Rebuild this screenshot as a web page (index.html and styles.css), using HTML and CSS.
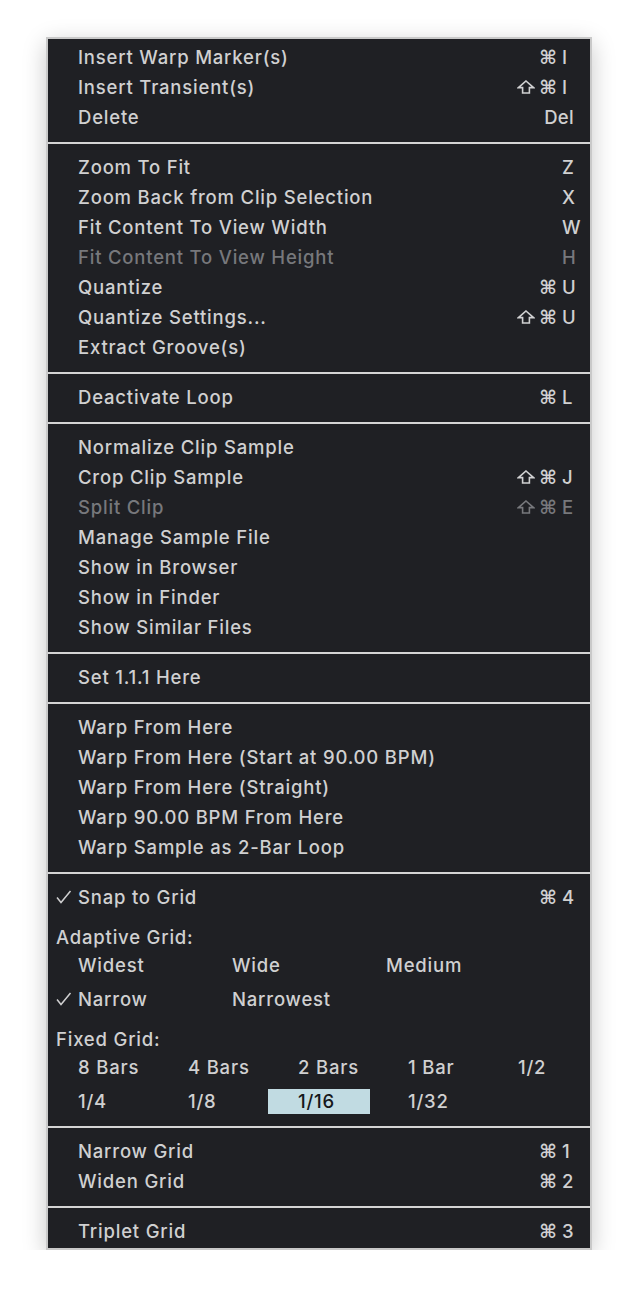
FILE: index.html
```html
<!DOCTYPE html>
<html>
<head>
<meta charset="utf-8">
<link rel="stylesheet" href="styles.css">
</head>
<body>
<div class="menu">
  <div class="section first">
    <div class="item"><span class="chk"></span><span class="label">Insert Warp Marker(s)</span><span class="sc"><span class="mod">⌘</span><span class="key">I</span></span></div>
    <div class="item"><span class="chk"></span><span class="label">Insert Transient(s)</span><span class="sc"><svg class="shift" width="18" height="14" viewBox="0 0 18 14"><polygon points="9,1 16.5,7.6 12.4,7.6 12.4,13 5.6,13 5.6,7.6 1.5,7.6" fill="none" stroke="currentColor" stroke-width="1.6"/></svg><span class="mod">⌘</span><span class="key">I</span></span></div>
    <div class="item"><span class="chk"></span><span class="label">Delete</span><span class="sc"><span class="word">Del</span></span></div>
  </div>
  <div class="sep"></div>
  <div class="section">
    <div class="item"><span class="chk"></span><span class="label">Zoom To Fit</span><span class="sc"><span class="key">Z</span></span></div>
    <div class="item"><span class="chk"></span><span class="label">Zoom Back from Clip Selection</span><span class="sc"><span class="key">X</span></span></div>
    <div class="item"><span class="chk"></span><span class="label">Fit Content To View Width</span><span class="sc"><span class="key">W</span></span></div>
    <div class="item disabled"><span class="chk"></span><span class="label">Fit Content To View Height</span><span class="sc"><span class="key">H</span></span></div>
    <div class="item"><span class="chk"></span><span class="label">Quantize</span><span class="sc"><span class="mod">⌘</span><span class="key">U</span></span></div>
    <div class="item"><span class="chk"></span><span class="label">Quantize Settings...</span><span class="sc"><svg class="shift" width="18" height="14" viewBox="0 0 18 14"><polygon points="9,1 16.5,7.6 12.4,7.6 12.4,13 5.6,13 5.6,7.6 1.5,7.6" fill="none" stroke="currentColor" stroke-width="1.6"/></svg><span class="mod">⌘</span><span class="key">U</span></span></div>
    <div class="item"><span class="chk"></span><span class="label">Extract Groove(s)</span></div>
  </div>
  <div class="sep"></div>
  <div class="section">
    <div class="item"><span class="chk"></span><span class="label">Deactivate Loop</span><span class="sc"><span class="mod">⌘</span><span class="key">L</span></span></div>
  </div>
  <div class="sep"></div>
  <div class="section">
    <div class="item"><span class="chk"></span><span class="label">Normalize Clip Sample</span></div>
    <div class="item"><span class="chk"></span><span class="label">Crop Clip Sample</span><span class="sc"><svg class="shift" width="18" height="14" viewBox="0 0 18 14"><polygon points="9,1 16.5,7.6 12.4,7.6 12.4,13 5.6,13 5.6,7.6 1.5,7.6" fill="none" stroke="currentColor" stroke-width="1.6"/></svg><span class="mod">⌘</span><span class="key">J</span></span></div>
    <div class="item disabled"><span class="chk"></span><span class="label">Split Clip</span><span class="sc"><svg class="shift" width="18" height="14" viewBox="0 0 18 14"><polygon points="9,1 16.5,7.6 12.4,7.6 12.4,13 5.6,13 5.6,7.6 1.5,7.6" fill="none" stroke="currentColor" stroke-width="1.6"/></svg><span class="mod">⌘</span><span class="key">E</span></span></div>
    <div class="item"><span class="chk"></span><span class="label">Manage Sample File</span></div>
    <div class="item"><span class="chk"></span><span class="label">Show in Browser</span></div>
    <div class="item"><span class="chk"></span><span class="label">Show in Finder</span></div>
    <div class="item"><span class="chk"></span><span class="label">Show Similar Files</span></div>
  </div>
  <div class="sep"></div>
  <div class="section">
    <div class="item"><span class="chk"></span><span class="label">Set 1.1.1 Here</span></div>
  </div>
  <div class="sep"></div>
  <div class="section">
    <div class="item"><span class="chk"></span><span class="label">Warp From Here</span></div>
    <div class="item"><span class="chk"></span><span class="label">Warp From Here (Start at 90.00 BPM)</span></div>
    <div class="item"><span class="chk"></span><span class="label">Warp From Here (Straight)</span></div>
    <div class="item"><span class="chk"></span><span class="label">Warp 90.00 BPM From Here</span></div>
    <div class="item"><span class="chk"></span><span class="label">Warp Sample as 2-Bar Loop</span></div>
  </div>
  <div class="sep"></div>
  <div class="section grid-section">
    <div class="item"><span class="chk"><svg width="16" height="14" viewBox="0 0 16 14"><polyline points="1,7.5 5,12.5 14.5,1" fill="none" stroke="currentColor" stroke-width="1.5"/></svg></span><span class="label">Snap to Grid</span><span class="sc"><span class="mod">⌘</span><span class="key">4</span></span></div>
    <div class="group-label">Adaptive Grid:</div>
    <div class="adaptive">
      <div class="cell"><span class="chk"></span>Widest</div>
      <div class="cell"><span class="chk"></span>Wide</div>
      <div class="cell"><span class="chk"></span>Medium</div>
      <div class="cell"><span class="chk"><svg width="16" height="14" viewBox="0 0 16 14"><polyline points="1,7.5 5,12.5 14.5,1" fill="none" stroke="currentColor" stroke-width="1.5"/></svg></span>Narrow</div>
      <div class="cell"><span class="chk"></span>Narrowest</div>
    </div>
    <div class="group-label fixed-label">Fixed Grid:</div>
    <div class="fixed">
      <div class="fcell">8 Bars</div>
      <div class="fcell">4 Bars</div>
      <div class="fcell">2 Bars</div>
      <div class="fcell">1 Bar</div>
      <div class="fcell">1/2</div>
      <div class="fcell">1/4</div>
      <div class="fcell">1/8</div>
      <div class="fcell selected">1/16</div>
      <div class="fcell">1/32</div>
    </div>
  </div>
  <div class="sep"></div>
  <div class="section">
    <div class="item"><span class="chk"></span><span class="label">Narrow Grid</span><span class="sc"><span class="mod">⌘</span><span class="key">1</span></span></div>
    <div class="item"><span class="chk"></span><span class="label">Widen Grid</span><span class="sc"><span class="mod">⌘</span><span class="key">2</span></span></div>
  </div>
  <div class="sep"></div>
  <div class="section last">
    <div class="item"><span class="chk"></span><span class="label">Triplet Grid</span><span class="sc"><span class="mod">⌘</span><span class="key">3</span></span></div>
  </div>
</div>
</body>
</html>
```
FILE: styles.css
```css
html, body {
  margin: 0;
  background: #ffffff;
}
body {
  padding: 37px 0 0 46px;
  font-family: Inter, "Noto Sans", sans-serif;
  font-size: 18.5px;
  font-weight: 500;
  letter-spacing: 0.8px;
  color: #d0d0d1;
}
.menu {
  box-sizing: border-box;
  width: 546px;
  background: #1f2024;
  border: 2px solid #c9c9c9;
  box-shadow: 0 6px 22px rgba(0, 0, 0, 0.22);
}
.section {
  padding: 8px 0 10px;
}
.section.first {
  padding-top: 3px;
}
.section.grid-section {
  padding-bottom: 8px;
}
.section.last {
  padding-bottom: 2px;
}
.sep {
  height: 2px;
  background: #d4d4d4;
}
.item {
  display: flex;
  align-items: center;
  height: 30px;
  padding: 0 16px 0 8px;
}
.chk {
  display: inline-flex;
  align-items: center;
  width: 22px;
  flex: none;
}
.label {
  flex: 1;
  white-space: nowrap;
}
.disabled {
  color: #77787c;
}
.sc {
  display: flex;
  align-items: center;
}
.shift {
  display: block;
}
.mod {
  font-family: "DejaVu Sans", sans-serif;
  font-size: 19px;
  font-weight: 700;
  letter-spacing: 0;
  margin-left: 4px;
}
.key {
  width: 12px;
  margin-left: 5px;
  letter-spacing: 0;
  white-space: nowrap;
}
.word {
  letter-spacing: 0.3px;
}
.group-label {
  height: 22px;
  line-height: 22px;
  margin-top: 14px;
  padding-left: 8px;
}
.group-label.fixed-label {
  margin-top: 12px;
}
.adaptive {
  display: grid;
  grid-template-columns: repeat(3, 154px);
  grid-auto-rows: 34px;
}
.cell {
  display: flex;
  align-items: center;
  padding-left: 8px;
  white-space: nowrap;
}
.fixed {
  display: grid;
  grid-template-columns: repeat(5, 102px);
  column-gap: 8px;
  grid-auto-rows: 34px;
}
.fcell {
  display: flex;
  align-items: center;
  padding-left: 30px;
  white-space: nowrap;
}
.fcell.selected {
  background: #c1dbe2;
  color: #15171a;
  height: 25px;
  align-self: center;
}
```
